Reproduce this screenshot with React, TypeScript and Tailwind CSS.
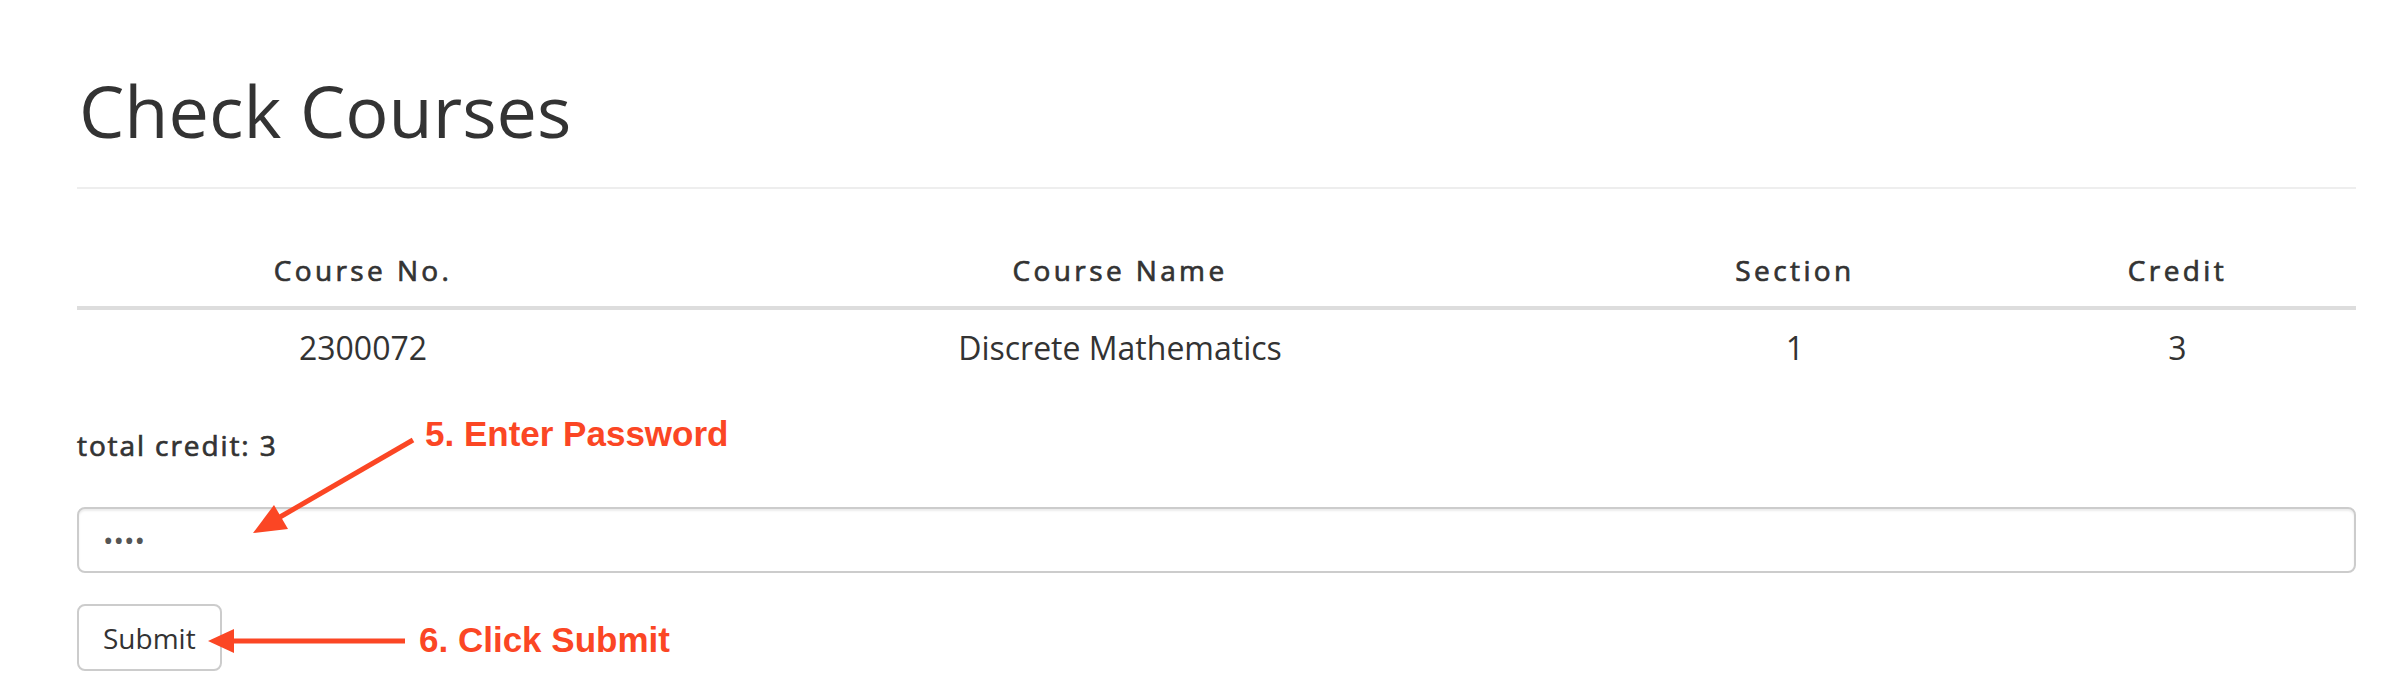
import { useState } from "react";

const courses = [
  { no: "2300072", name: "Discrete Mathematics", section: "1", credit: "3" },
];

const cols = "grid grid-cols-[572px_942px_408px_1fr]";

export default function App() {
  const [pw, setPw] = useState("abcd");
  const total = courses.reduce((s, c) => s + Number(c.credit), 0);

  return (
    <div className="relative min-h-[692px] w-[2396px] bg-white font-['Open_Sans',sans-serif] text-[#333]">
      <div className="pl-[77px] pr-[40px] pt-[70px]">
        <h1 className="border-b-2 border-[#eee] pb-[37px] pl-[2px] text-[72px] leading-[80px] font-normal">
          Check Courses
        </h1>

        <div className={`${cols} border-b-4 border-[#ddd] pt-[61px] pb-[16px] text-center text-[28px] leading-[40px] font-normal tracking-[3.4px] [-webkit-text-stroke:0.7px_#333]`}>
          <div>Course No.</div>
          <div>Course Name</div>
          <div>Section</div>
          <div>Credit</div>
        </div>
        {courses.map((c) => (
          <div key={c.no} className={`${cols} py-[16px] text-center text-[32px] leading-[44px]`}>
            <div>{c.no}</div>
            <div>{c.name}</div>
            <div>{c.section}</div>
            <div>{c.credit}</div>
          </div>
        ))}

        <div className="mt-[39px] text-[28px] leading-[40px] font-normal tracking-[1.9px] [-webkit-text-stroke:0.7px_#333]">
          total credit: {total}
        </div>

        <input
          type="password"
          value={pw}
          onChange={(e) => setPw(e.target.value)}
          className="mt-[42px] block h-[66px] w-full rounded-[8px] border-2 border-[#ccc] px-[24px] text-[28px] text-[#555] shadow-[inset_0_2px_2px_rgba(0,0,0,0.075)] outline-none"
        />

        <button className="mt-[31px] h-[67px] rounded-[8px] border-2 border-[#ccc] bg-white px-[24px] text-[28px] text-[#333]">
          Submit
        </button>
      </div>

      {/* annotations */}
      <svg className="pointer-events-none absolute left-0 top-0" width="2396" height="692">
        <line x1="413" y1="440" x2="280" y2="517" stroke="#fb4624" strokeWidth="5" />
        <polygon points="253,533 288,529 274,505" fill="#fb4624" />
        <line x1="405" y1="641" x2="230" y2="641" stroke="#fb4624" strokeWidth="5" />
        <polygon points="208,641 234,629 234,653" fill="#fb4624" />
      </svg>
      <div className="absolute left-[425px] top-[414px] font-['Liberation_Sans',Arial,sans-serif] text-[35px] leading-[40px] font-bold text-[#fb4624]">
        5. Enter Password
      </div>
      <div className="absolute left-[419px] top-[620px] font-['Liberation_Sans',Arial,sans-serif] text-[35px] leading-[40px] font-bold text-[#fb4624]">
        6. Click Submit
      </div>
    </div>
  );
}
